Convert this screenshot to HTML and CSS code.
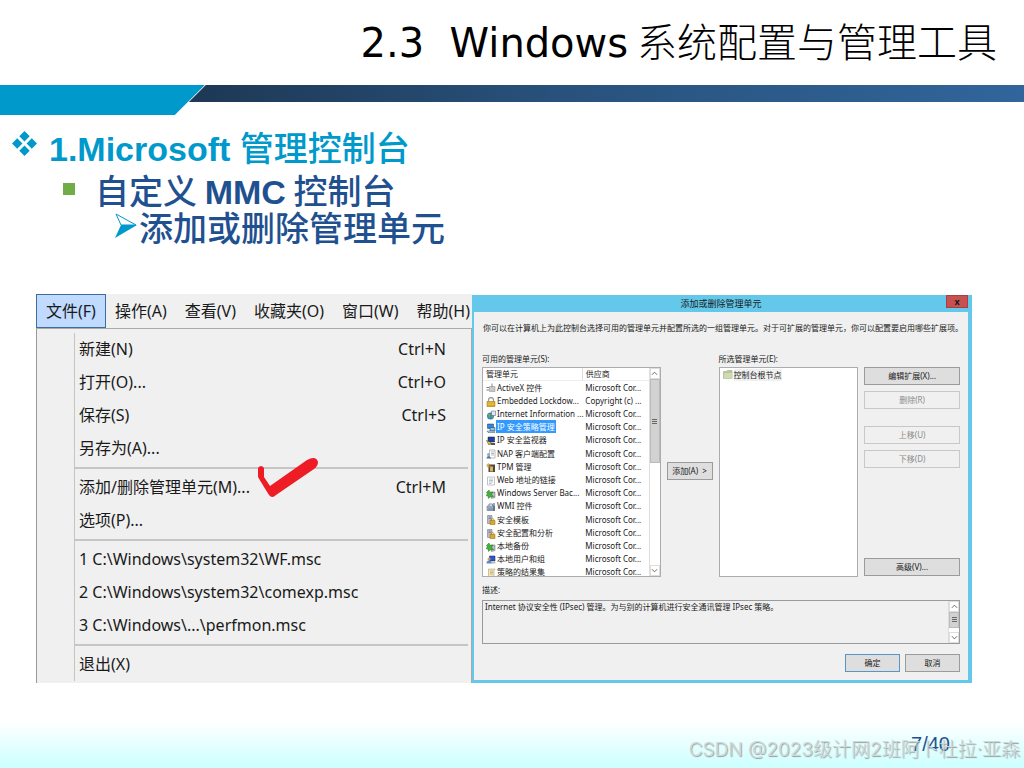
FILE: index.html
```html
<!DOCTYPE html>
<html lang="zh-CN">
<head>
<meta charset="utf-8">
<title>2.3 Windows 系统配置与管理工具</title>
<link rel="stylesheet" href="styles.css">
</head>
<body>
<svg class="defs" aria-hidden="true">
  <symbol id="i-plug" viewBox="0 0 20 20"><path d="M1 9h5M1 14h5" stroke="#777" stroke-width="2"/><path d="M7 7h11v10H7z" fill="#c8c8c8" stroke="#888"/><path d="M12 1v7" stroke="#888" stroke-width="2"/></symbol>
  <symbol id="i-lock" viewBox="0 0 20 20"><path d="M5 9V6a5 5 0 0 1 10 0v3" fill="none" stroke="#999" stroke-width="2.5"/><path d="M2 9h16v10H2z" fill="#d9a520" stroke="#97700c"/><path d="M3 12h14M3 15h14" stroke="#f4d26b"/></symbol>
  <symbol id="i-globe" viewBox="0 0 20 20"><circle cx="9" cy="12" r="7" fill="#3a7fc1"/><path d="M4 9q4-4 5 0t-3 8M11 12h4l-3 6z" fill="#63b447"/><path d="M11 2h8v9h-8z" fill="#dfe9f2" stroke="#557"/></symbol>
  <symbol id="i-ipsec" viewBox="0 0 20 20"><path d="M3 2h12v9H3z" fill="#2b8be0" stroke="#234"/><path d="M8 9h10v7H8z" fill="#7cc5f5" stroke="#234"/><path d="M2 16h14l2 3H4z" fill="#bcd3d8" stroke="#456"/></symbol>
  <symbol id="i-monitor" viewBox="0 0 20 20"><path d="M4 2h13v10H4z" fill="#1c3fa8" stroke="#222"/><path d="M1 9l9 4-4 5z" fill="#f0d51f" stroke="#333"/><path d="M9 14h9v4H9z" fill="#555"/></symbol>
  <symbol id="i-nap" viewBox="0 0 20 20"><path d="M7 2h11v16H7z" fill="#fff" stroke="#777"/><path d="M10 6h6M10 9h6M10 12h6" stroke="#778"/><circle cx="5" cy="11" r="3" fill="#8ca9c8"/><path d="M1 19q0-5 4-5t5 5z" fill="#5375a0"/></symbol>
  <symbol id="i-tpm" viewBox="0 0 20 20"><path d="M5 3h13v15H5z" fill="#554737"/><path d="M8 7h6v10H8z" fill="#d3b26b"/><circle cx="5" cy="5" r="3" fill="none" stroke="#c28c20" stroke-width="2"/></symbol>
  <symbol id="i-page" viewBox="0 0 20 20"><path d="M3 2h14v16H3z" fill="#fff" stroke="#888"/><path d="M6 6h8M6 9h8M6 12h8M6 15h5" stroke="#6a87a0"/></symbol>
  <symbol id="i-backup" viewBox="0 0 20 20"><path d="M9 6h9v11l-7 2z" fill="#b9bcc0" stroke="#667"/><path d="M1 7l5-5 2 5 6-1-3 5 4 4-7 1-3 3-1-5-4-1 3-3z" fill="#44b03a" stroke="#22751d"/></symbol>
  <symbol id="i-wmi" viewBox="0 0 20 20"><path d="M2 8h15v9H2z" fill="#a9b9cd" stroke="#536780"/><path d="M6 8V4h7v4M6 11v6M10 11v6M14 11v6" fill="none" stroke="#536780" stroke-width="1.5"/><path d="M16 2v16" stroke="#38506c" stroke-width="2"/></symbol>
  <symbol id="i-server" viewBox="0 0 20 20"><path d="M3 1h9v16H3z" fill="#b8bec6" stroke="#667"/><path d="M5 4h5M5 7h5" stroke="#556"/><path d="M8 11h10v8H8z" fill="#dca62a" stroke="#93690c"/><path d="M10 11V9q3-4 6 0v2" fill="none" stroke="#a9801e" stroke-width="1.5"/></symbol>
  <symbol id="i-users" viewBox="0 0 20 20"><path d="M7 2h11v10H7z" fill="#2b57d0" stroke="#223"/><circle cx="6" cy="8" r="3" fill="#c99b70"/><path d="M1 17q0-6 5-6t6 6z" fill="#6188be"/><path d="M11 14h8v3h-8z" fill="#bbb"/></symbol>
  <symbol id="i-scroll" viewBox="0 0 20 20"><path d="M5 2h13l-2 3v13H3l2-3z" fill="#f1e6bd" stroke="#a48d50"/><path d="M8 6h6M8 9h6M8 12h6" stroke="#998a5c"/></symbol>
  <symbol id="i-up" viewBox="0 0 8 8"><path d="M1 5.500l3-3 3 3" fill="none" stroke="#555"/></symbol>
  <symbol id="i-down" viewBox="0 0 8 8"><path d="M1 2.500l3 3 3-3" fill="none" stroke="#555"/></symbol>
</svg>

<main class="slide">
  <header class="title"><h1>2.3 &nbsp;Windows<span class="thin"> 系统配置与管理工具</span></h1></header>
  <div class="band"><div class="band-accent"></div><div class="band-bar"></div></div>

  <section class="outline">
    <h2 class="level1">
      <svg class="diamonds" viewBox="0 0 24 24"><path d="M12 0l5 5-5 5-5-5zM12 14l5 5-5 5-5-5zM5 7l5 5-5 5-5-5zM19 7l5 5-5 5-5-5z" fill="#0099cc"/></svg>
      <span>1.Microsoft <span class="cjk">管理控制台</span></span>
    </h2>
    <h3 class="level2"><span class="square"></span><span><span class="cjk">自定义 </span>MMC<span class="cjk"> 控制台</span></span></h3>
    <h4 class="level3">
      <svg class="arrow" viewBox="0 0 22 25"><path d="M1 1l20 11H6z" fill="#fff" stroke="#0099cc"/><path d="M6 12h16L0 25z" fill="#0099cc"/></svg>
      <span class="cjk">添加或删除管理单元</span>
    </h4>
  </section>

  <section class="shots">
    <div class="console">
      <nav class="menubar">
        <button class="open">文件(F)</button><button>操作(A)</button><button>查看(V)</button><button>收藏夹(O)</button><button>窗口(W)</button><button>帮助(H)</button>
      </nav>
      <div class="dropdown">
        <div class="items">
          <button><span>新建(N)</span><span>Ctrl+N</span></button>
          <button><span>打开(O)...</span><span>Ctrl+O</span></button>
          <button><span>保存(S)</span><span>Ctrl+S</span></button>
          <button><span>另存为(A)...</span></button>
          <hr>
          <button><span>添加/删除管理单元(M)...</span><span>Ctrl+M</span></button>
          <button><span>选项(P)...</span></button>
          <hr>
          <button><span>1 C:\Windows\system32\WF.msc</span></button>
          <button><span>2 C:\Windows\system32\comexp.msc</span></button>
          <button><span>3 C:\Windows\...\perfmon.msc</span></button>
          <hr>
          <button><span>退出(X)</span></button>
        </div>
        <svg class="tick" viewBox="0 0 62 42"><path d="M1 11q3-4 6 0v9l6 9L50 3q9-5 11 2 0 4-4 7L19 38q-4 4-7 0L7 30 1 20z" fill="#ee1c24"/></svg>
      </div>
    </div>

    <div class="dialog">
      <div class="dialog-title"><span>添加或删除管理单元</span><button class="close" aria-label="关闭">x</button></div>
      <div class="dialog-body">
        <p class="intro">你可以在计算机上为此控制台选择可用的管理单元并配置所选的一组管理单元。对于可扩展的管理单元，你可以配置要启用哪些扩展项。</p>
        <div class="columns">
          <div class="col">
            <span class="label">可用的管理单元(S):</span>
            <div class="listbox">
              <div class="rows">
                <table>
                  <thead><tr><th>管理单元</th><th>供应商</th></tr></thead>
                  <tbody>
                    <tr><td><svg><use href="#i-plug"/></svg><span>ActiveX 控件</span></td><td>Microsoft Cor...</td></tr>
                    <tr><td><svg><use href="#i-lock"/></svg><span>Embedded Lockdow...</span></td><td>Copyright (c) ...</td></tr>
                    <tr><td><svg><use href="#i-globe"/></svg><span>Internet Information ...</span></td><td>Microsoft Cor...</td></tr>
                    <tr class="selected"><td><svg><use href="#i-ipsec"/></svg><span>IP 安全策略管理</span></td><td>Microsoft Cor...</td></tr>
                    <tr><td><svg><use href="#i-monitor"/></svg><span>IP 安全监视器</span></td><td>Microsoft Cor...</td></tr>
                    <tr><td><svg><use href="#i-nap"/></svg><span>NAP 客户端配置</span></td><td>Microsoft Cor...</td></tr>
                    <tr><td><svg><use href="#i-tpm"/></svg><span>TPM 管理</span></td><td>Microsoft Cor...</td></tr>
                    <tr><td><svg><use href="#i-page"/></svg><span>Web 地址的链接</span></td><td>Microsoft Cor...</td></tr>
                    <tr><td><svg><use href="#i-backup"/></svg><span>Windows Server Bac...</span></td><td>Microsoft Cor...</td></tr>
                    <tr><td><svg><use href="#i-wmi"/></svg><span>WMI 控件</span></td><td>Microsoft Cor...</td></tr>
                    <tr><td><svg><use href="#i-server"/></svg><span>安全模板</span></td><td>Microsoft Cor...</td></tr>
                    <tr><td><svg><use href="#i-server"/></svg><span>安全配置和分析</span></td><td>Microsoft Cor...</td></tr>
                    <tr><td><svg><use href="#i-backup"/></svg><span>本地备份</span></td><td>Microsoft Cor...</td></tr>
                    <tr><td><svg><use href="#i-users"/></svg><span>本地用户和组</span></td><td>Microsoft Cor...</td></tr>
                    <tr><td><svg><use href="#i-scroll"/></svg><span>策略的结果集</span></td><td>Microsoft Cor...</td></tr>
                  </tbody>
                </table>
              </div>
              <div class="scroll">
                <button aria-label="向上"><svg><use href="#i-up"/></svg></button>
                <div class="thumb"><i></i></div>
                <div class="track"></div>
                <button aria-label="向下"><svg><use href="#i-down"/></svg></button>
              </div>
            </div>
          </div>
          <div class="middle"><button class="btn">添加(A) &nbsp;&gt;</button></div>
          <div class="col">
            <span class="label">所选管理单元(E):</span>
            <div class="listbox tree">
              <div class="node"><svg viewBox="0 0 20 18"><path d="M1 3h6l2-2h9v16H1z" fill="#b9c69a" stroke="#96a377"/><path d="M3 6h16v11H1z" fill="#cfd9b2"/></svg><span>控制台根节点</span></div>
            </div>
          </div>
          <div class="side">
            <button class="btn">编辑扩展(X)...</button>
            <button class="btn" disabled>删除(R)</button>
            <button class="btn move" disabled>上移(U)</button>
            <button class="btn" disabled>下移(D)</button>
            <button class="btn last">高级(V)...</button>
          </div>
        </div>
        <label class="label" for="desc">描述:</label>
        <div class="desc">
          <textarea id="desc" readonly>Internet 协议安全性 (IPsec) 管理。为与别的计算机进行安全通讯管理 IPsec 策略。</textarea>
          <div class="scroll small">
            <button aria-label="向上"><svg><use href="#i-up"/></svg></button>
            <div class="thumb"><i></i></div>
            <div class="track"></div>
            <button aria-label="向下"><svg><use href="#i-down"/></svg></button>
          </div>
        </div>
        <div class="actions"><button class="btn primary">确定</button><button class="btn">取消</button></div>
      </div>
    </div>
  </section>

  <footer class="footer">
    <span class="page">7/40</span>
    <span class="watermark">CSDN @2023级计网2班阿卜杜拉·亚森</span>
  </footer>
</main>
</body>
</html>
```
FILE: styles.css
```css
* { box-sizing: border-box; }
body { margin: 0; background: #fff; }
h1, h2, h3, h4, p { margin: 0; }
button { font: inherit; color: inherit; margin: 0; padding: 0; border: 0; background: none; }
.defs { display: none; }

.slide { display: flex; flex-direction: column; min-height: 100vh; overflow: hidden; }

.title { height: 85px; padding: 0 27px; text-align: right; }
.title h1 { font: 400 40px/80px "DejaVu Sans", "Noto Sans CJK SC", sans-serif; white-space: nowrap; }
.thin { font-family: "Noto Sans CJK SC", sans-serif; font-weight: 300; }

.band { display: flex; height: 30px; }
.band-accent { width: 20%; background: #0099cc; clip-path: polygon(0 0, 100% 0, calc(100% - 30px) 100%, 0 100%); }
.band-bar { flex: 1; height: 17px; margin-left: -16px; background: linear-gradient(90deg, #1e3855, #28527c 45%, #31659b); clip-path: polygon(17px 0, 100% 0, 100% 100%, 0 100%); }

.outline { padding: 12px; color: #1f5190; font-family: "Liberation Sans", "Noto Sans CJK SC", sans-serif; height: 179px; }
.outline h2, .outline h3, .outline h4 { display: flex; align-items: flex-start; font-size: 34px; font-weight: 700; white-space: nowrap; }
.cjk { font-family: "Noto Sans CJK SC", sans-serif; font-weight: 500; }
.outline .level1 { gap: 12px; color: #0099cc; line-height: 40px; height: 44px; }
.outline .level2 { gap: 20px; padding-left: 51px; line-height: 38px; height: 42px; }
.outline .level3 { gap: 2px; padding-left: 103px; line-height: 28px; height: 32px; }
.diamonds { width: 25px; height: 25px; margin-top: 4px; }
.square { width: 12px; height: 12px; margin-top: 12px; background: #70ad47; }
.arrow { width: 22px; height: 25px; }

.shots { display: grid; grid-template-columns: minmax(0, 436fr) minmax(0, 500fr); margin: 0 52px 0 36px; }

.console { display: flex; flex-direction: column; background: #f0f0f0; color: #1a1a1a; font: 16px/33px "Noto Sans", "Noto Sans CJK SC", sans-serif; }
.menubar { display: flex; height: 35px; border-bottom: 1px solid #a8aca8; white-space: nowrap; }
.menubar button { padding: 0 9px; }
.menubar .open { background: #c0dbff; border: 1px solid #3c6f9f; }
.dropdown { position: relative; flex: 1; padding: 4px 3px 2px 37px; border-left: 1px solid #999; border-right: 1px solid #a8a8a8; }
.items { display: flex; flex-direction: column; border-left: 1px solid #c4c4c4; }
.items button { display: flex; justify-content: space-between; padding: 0 22px 0 4px; height: 33px; }
.items hr { width: 100%; height: 2px; margin: 2px 0; border: 0; background: #c6c6c6; }
.tick { position: absolute; left: 220px; top: 128px; width: 62px; height: 42px; }

.dialog { display: flex; flex-direction: column; margin-top: 1px; padding: 0 4px 3px 2px; background: #63c8e9; color: #1a1a1a; font: 8px/12px "Noto Sans", "Noto Sans CJK SC", sans-serif; }
.dialog-title { position: relative; height: 17px; font-size: 9px; line-height: 17px; text-align: center; }
.close { position: absolute; right: 0; top: 0; width: 22px; height: 13px; background: #c75050; border: 1px solid #a34343; font-size: 9px; font-weight: 700; line-height: 10px; }
.dialog-body { flex: 1; display: flex; flex-direction: column; padding: 10px 8px 8px; background: #f0f0f0; }
.intro { padding-left: 1px; white-space: nowrap; }
.columns { display: grid; grid-template-columns: minmax(0, 179fr) minmax(0, 46fr) minmax(0, 140fr) minmax(0, 96fr); column-gap: 6px; margin-top: 19px; }
.label { display: block; height: 14px; }
.listbox { display: flex; height: 210px; background: #fff; border: 1px solid #a9adb3; overflow: hidden; }
.rows { flex: 1; min-width: 0; overflow: hidden; }
table { width: 100%; height: 211px; border-collapse: collapse; table-layout: fixed; }
th, td { padding: 0 0 0 3px; font-weight: 400; line-height: 12px; text-align: left; white-space: nowrap; }
th:first-child { width: 60%; border-right: 1px solid #ddd; }
th { border-bottom: 1px solid #eee; }
td span { padding: 1px; }
td svg { width: 10px; height: 10px; vertical-align: middle; }
.selected td span { background: #3399ff; color: #fff; }

.scroll { display: flex; flex-direction: column; width: 11px; background: #fff; border-left: 1px solid #ddd; }
.scroll button { height: 11px; display: grid; place-items: center; border: 1px solid #ddd; }
.scroll svg { width: 7px; height: 7px; }
.thumb { flex: 84; display: grid; place-items: center; background: #d2d2d2; border: 1px solid #bbb; }
.thumb i { width: 5px; height: 5px; background: repeating-linear-gradient(#666 0 1px, #d2d2d2 1px 2px); }
.track { flex: 104; }
.small .thumb { flex: 15; }
.small .track { flex: 5; }

.btn { height: 18px; border: 1px solid #9b9b9b; background: #dedede; line-height: 16px; white-space: nowrap; }
.btn:disabled { background: #f0f0f0; border-color: #c8c8c8; color: #8c8c8c; }
.middle .btn { width: 100%; margin-top: 109px; }
.tree { padding: 0 3px; }
.node { display: flex; align-items: center; height: 13px; gap: 1px; }
.node svg { width: 10px; height: 9px; }
.node span { background: #f0f0f0; }
.side { display: flex; flex-direction: column; gap: 6px; padding: 14px 0 1px; }
.side .move { margin-top: 11px; }
.side .last { margin-top: auto; }

.columns + .label { height: 17px; padding-top: 7px; margin-bottom: 6px; }
.desc { display: flex; height: 44px; border: 1px solid #9a9a9a; }
.desc textarea { flex: 1; padding: 0 2px; border: 0; background: none; color: inherit; font: inherit; resize: none; overflow: hidden; }
.actions { display: flex; justify-content: flex-end; gap: 5px; margin-top: auto; }
.actions .btn { width: 55px; }
.actions .btn.primary { border-color: #5b94c2; }

.footer { position: relative; height: 46px; margin-top: auto; background: linear-gradient(#fff, #ccffff); }
.page { position: absolute; right: 74px; top: 10px; color: #1f5190; font: 20px/24px "Liberation Sans", sans-serif; }
.watermark { position: absolute; right: 4px; top: 15px; color: #d0d8d8; font: 300 19px/26px "Inter", "Noto Sans CJK SC", sans-serif; white-space: nowrap; text-shadow: 1px 1px 1px #929c9c; }
```
